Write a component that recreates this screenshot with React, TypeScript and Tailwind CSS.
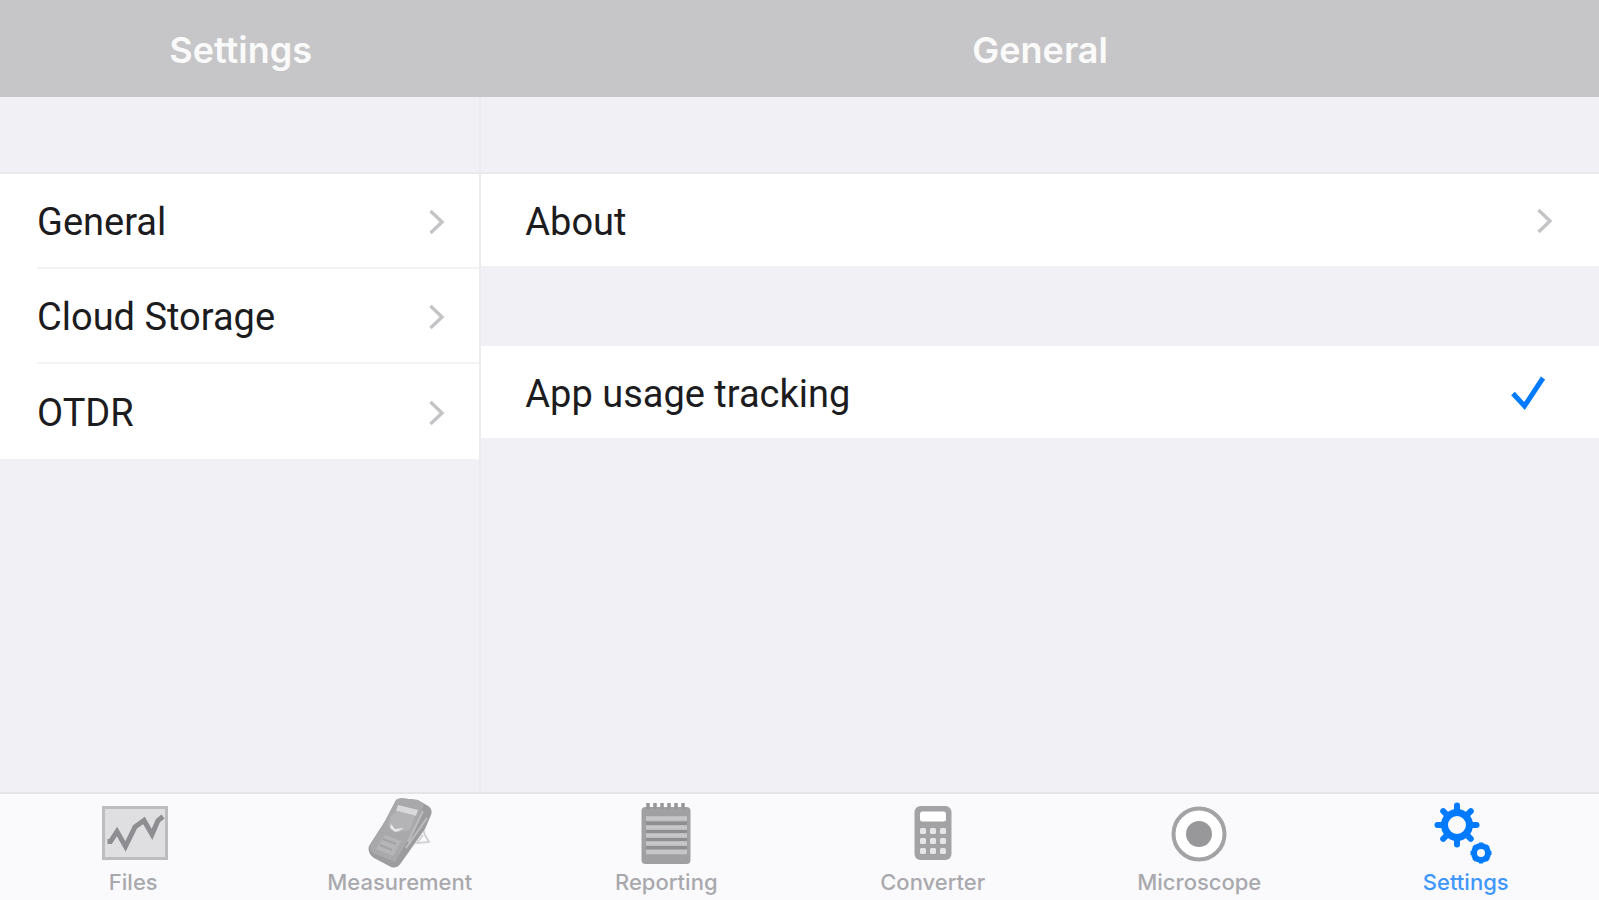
import React, { useState } from "react";

const settingsSections = ["General", "Cloud Storage", "OTDR"];

function Chevron() {
  return (
    <svg viewBox="0 0 18 28" className="h-7 w-[18px] shrink-0" fill="none" stroke="#c4c4c7" strokeWidth="3.4" aria-hidden="true">
      <path d="M2.5 2 14 13 2.5 24" />
    </svg>
  );
}

function FilesIcon() {
  return (
    <>
      <rect x="10.5" y="11.5" width="63" height="51" fill="#dfdfe1" stroke="#bdbdbf" strokeWidth="3" />
      <path d="M14.5 45.5h3L24 35.5l8.5 15L42 31l9-6.5L59 38.5l6-14 5-4" fill="none" stroke="#8e8e92" strokeWidth="5" />
    </>
  );
}

function MeterIcon() {
  return (
    <>
      <path d="M63 33l2 6 4 7-12 1 6-8" fill="none" stroke="#d3d3d6" strokeWidth="2" />
      <path d="M36 4Q39 1.5 44 2.5L58 4l11 6.5Q73 14 71 19L65 33 41 67q-4 6-10 4L14 62Q7 57 9 50l16-25z" fill="#9c9c9f" />
      <path d="M36 4Q39 1.5 44 2.5L58 4l6 5-12 28-17 29-20-8Q8 54 11 48l15-24z" fill="#a9a9ac" />
      <path d="M38 9l20 5-2 6-20-5z" fill="#d9d9dc" />
      <path d="M31 20l7-5 17 5-5 14-12 2-10-6z" fill="#b4b4b7" />
      <path d="M31 28l4 5 9-1-5 3-4 1-5-4z" fill="#e6e6e8" />
      <path d="M25 39l16 6-8 15-17-7z" fill="#b5b5b8" />
      <path d="M23 43l13 5M20 49l12 5" stroke="#a3a3a6" strokeWidth="2" />
      <path d="M63 15 48 46M67 22 46 52" stroke="#bcbcbf" strokeWidth="2" />
    </>
  );
}

function NotepadIcon() {
  return (
    <>
      <rect x="15.5" y="11" width="49" height="57" rx="4" fill="#a0a0a3" />
      <path d="M22 13V7M29 13V7M36 13V7M43 13V7M50 13V7M57 13V7" stroke="#97979b" strokeWidth="3.5" />
      <path d="M20 22.5h41M20 31.5h41M20 39.5h41M20 47.5h41M20 56h41" stroke="#c6c6c8" strokeWidth="4.5" />
      <path d="M20 27.5h41M20 35.5h41M20 43.5h41M20 51.5h41" stroke="#8e8e92" strokeWidth="3" />
    </>
  );
}

function CalculatorIcon() {
  return (
    <>
      <rect x="21.5" y="10" width="37" height="54" rx="6" fill="#a3a3a6" />
      <rect x="27" y="15.5" width="26" height="10" rx="2.5" fill="#fff" />
      {[35, 45, 55].map((y) =>
        [30, 40, 50].map((x) => (
          <rect key={`${x}-${y}`} x={x - 3} y={y - 3} width="6" height="6" rx="1.5" fill="#e6e6e8" />
        )),
      )}
    </>
  );
}

function MicroscopeIcon() {
  return (
    <>
      <circle cx="40" cy="38" r="25.5" fill="#fff" stroke="#a3a3a6" strokeWidth="4" />
      <circle cx="40" cy="38" r="13" fill="#98989b" />
    </>
  );
}

function GearsIcon() {
  return (
    <g fill="none" stroke="#007aff">
      <circle cx="31" cy="29" r="12.5" strokeWidth="7" />
      {[0, 45, 90, 135, 180, 225, 270, 315].map((angle) => (
        <path key={angle} d="M31 16V9.5" strokeWidth="6" strokeLinecap="round" transform={`rotate(${angle} 31 29)`} />
      ))}
      <circle cx="55" cy="57" r="7" strokeWidth="6" />
      {[0, 45, 90, 135, 180, 225, 270, 315].map((angle) => (
        <path key={angle} d="M55 49V46.5" strokeWidth="4" transform={`rotate(${angle} 55 57)`} />
      ))}
    </g>
  );
}

const tabs = [
  { label: "Files", Icon: FilesIcon },
  { label: "Measurement", Icon: MeterIcon },
  { label: "Reporting", Icon: NotepadIcon },
  { label: "Converter", Icon: CalculatorIcon },
  { label: "Microscope", Icon: MicroscopeIcon },
  { label: "Settings", Icon: GearsIcon, active: true },
];

export default function App() {
  const [tracking, setTracking] = useState(true);

  return (
    <div className="flex min-h-screen flex-col bg-[#f0f0f5] font-['Roboto','Liberation_Sans',sans-serif] text-[#1c1c1e]">
      <header className="flex bg-[#c6c6c8] pt-1 pb-px font-['Inter','Liberation_Sans',sans-serif] font-semibold text-[#fafafa]">
        <h1 className="w-[30.1%] text-center text-4xl leading-[92px]">Settings</h1>
        <h2 className="flex-1 text-center text-4xl leading-[92px]">General</h2>
      </header>

      <div className="flex flex-1">
        <nav aria-label="Settings sections" className="w-[30.1%] border-r-2 border-[#ececf0] pt-[75px]">
          <ul className="border-t-2 border-[#e9e9ed] bg-white">
            {settingsSections.map((section, index) => (
              <li key={section} className="pl-[37px]">
                <a
                  href="#"
                  className={`flex h-[95px] items-center justify-between pt-1 pr-[33px] text-[38px] ${index < settingsSections.length - 1 ? "border-b-2 border-[#f3f3f4]" : ""}`}
                >
                  {section}
                  <Chevron />
                </a>
              </li>
            ))}
          </ul>
        </nav>

        <main className="flex flex-1 flex-col gap-20 pt-[75px]">
          <a href="#" className="flex h-[94px] items-center justify-between border-t-2 border-[#e9e9ed] bg-white pt-1 pr-[45px] pl-11 text-[38px]">
            About
            <Chevron />
          </a>
          <label className="flex h-[92px] items-center justify-between bg-white pt-1 pr-[53px] pl-11 text-[38px]">
            App usage tracking
            <input type="checkbox" className="peer sr-only" checked={tracking} onChange={(e) => setTracking(e.target.checked)} />
            <svg viewBox="0 0 36 36" className="invisible size-9 peer-checked:visible" fill="none" stroke="#007aff" strokeWidth="5" aria-hidden="true">
              <path d="M3 17.5 14.5 30 33 2" />
            </svg>
          </label>
        </main>
      </div>

      <nav aria-label="Main" className="flex h-[108px] border-t-2 border-[#e4e4e8] bg-[#fafafd] font-['Inter','Liberation_Sans',sans-serif] text-[22px] leading-7 font-medium">
        {tabs.map(({ label, Icon, active }) => (
          <a
            key={label}
            href="#"
            aria-current={active ? "page" : undefined}
            className={`flex flex-1 flex-col items-center pt-0.5 ${active ? "text-[#3f97fb]" : "text-[#a9a9ad]"}`}
          >
            <svg viewBox="0 0 80 72" className="h-[72px] w-20 shrink-0" aria-hidden="true">
              <Icon />
            </svg>
            {label}
          </a>
        ))}
      </nav>
    </div>
  );
}
